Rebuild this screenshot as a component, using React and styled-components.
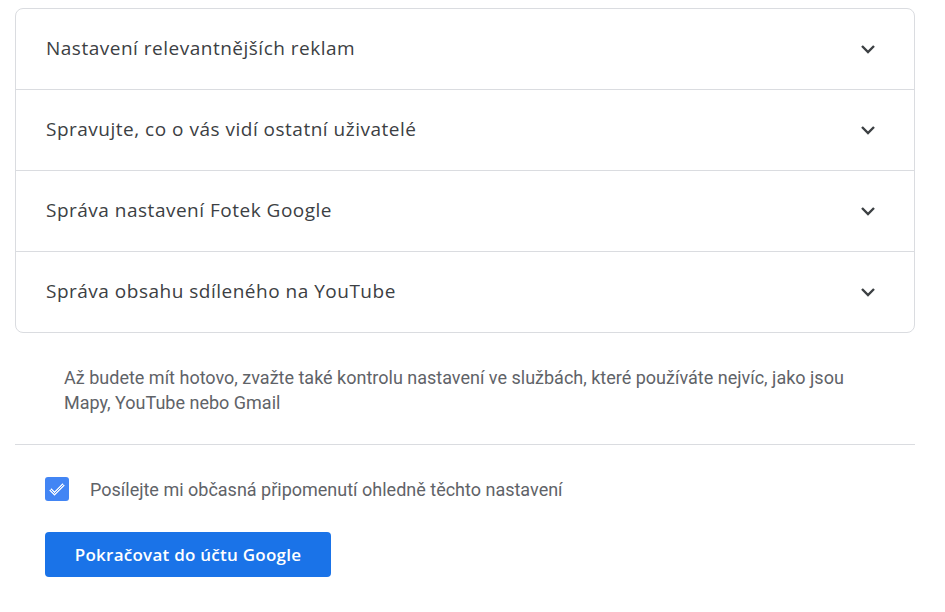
import React from "react";
import styled, { createGlobalStyle } from "styled-components";

const Global = createGlobalStyle`
  html, body { margin: 0; padding: 0; background: #fff; }
  body { font-family: Roboto, "Liberation Sans", sans-serif; }
`;

const Page = styled.div`
  width: 900px;
  padding: 8px 0 0 15px;
`;

const Card = styled.div`
  border: 1px solid #dadce0;
  border-radius: 8px;
  overflow: hidden;
`;

const Row = styled.div`
  height: 80px;
  display: flex;
  align-items: center;
  justify-content: space-between;
  padding: 0 34px 0 30px;
  border-top: ${(p) => (p.first ? "none" : "1px solid #dadce0")};
`;

const Title = styled.span`
  font-family: "Open Sans", Roboto, sans-serif;
  font-weight: 500;
  font-size: 19px;
  color: #3c4043;
  letter-spacing: 0.5px;
  margin-top: -2px;
`;

const Note = styled.p`
  margin: 0;
  padding: 32px 40px 29px 49px;
  font-size: 18px;
  line-height: 25px;
  color: #5f6368;
`;

const Divider = styled.div`
  height: 1px;
  background: #dadce0;
`;

const CheckRow = styled.label`
  display: flex;
  align-items: center;
  gap: 21px;
  padding: 32px 0 0 30px;
  font-size: 18px;
  color: #5f6368;
`;

const Box = styled.span`
  width: 24px;
  height: 24px;
  border-radius: 3px;
  background: #4285f4;
  display: flex;
  align-items: center;
  justify-content: center;
`;

const Button = styled.button`
  margin: 31px 0 0 30px;
  width: 286px;
  height: 45px;
  border: none;
  border-radius: 4px;
  background: #1a73e8;
  color: #fff;
  font-family: "Open Sans", Roboto, sans-serif;
  font-weight: 600;
  font-size: 17px;
  letter-spacing: 0.25px;
  cursor: pointer;
`;

const Chevron = () => (
  <svg width="24" height="24" viewBox="0 0 24 24">
    <path d="M6 9l6 6 6-6" fill="none" stroke="#3c4043" strokeWidth="2.4" />
  </svg>
);

const items = [
  "Nastavení relevantnějších reklam",
  "Spravujte, co o vás vidí ostatní uživatelé",
  "Správa nastavení Fotek Google",
  "Správa obsahu sdíleného na YouTube",
];

export default function App() {
  return (
    <>
      <Global />
      <Page>
        <Card>
          {items.map((t, i) => (
            <Row key={t} first={i === 0}>
              <Title>{t}</Title>
              <Chevron />
            </Row>
          ))}
        </Card>
        <Note>
          Až budete mít hotovo, zvažte také kontrolu nastavení ve službách, které používáte nejvíc, jako jsou Mapy, YouTube nebo Gmail
        </Note>
        <Divider />
        <CheckRow>
          <Box>
            <svg width="20" height="20" viewBox="0 0 24 24">
              <path d="M4 12.5l5 5L20 6.5" fill="none" stroke="#fff" strokeWidth="3.6" />
              <path d="M4 12.5l5 5L20 6.5" fill="none" stroke="#4285f4" strokeWidth="1.2" />
            </svg>
          </Box>
          Posílejte mi občasná připomenutí ohledně těchto nastavení
        </CheckRow>
        <Button>Pokračovat do účtu Google</Button>
      </Page>
    </>
  );
}
